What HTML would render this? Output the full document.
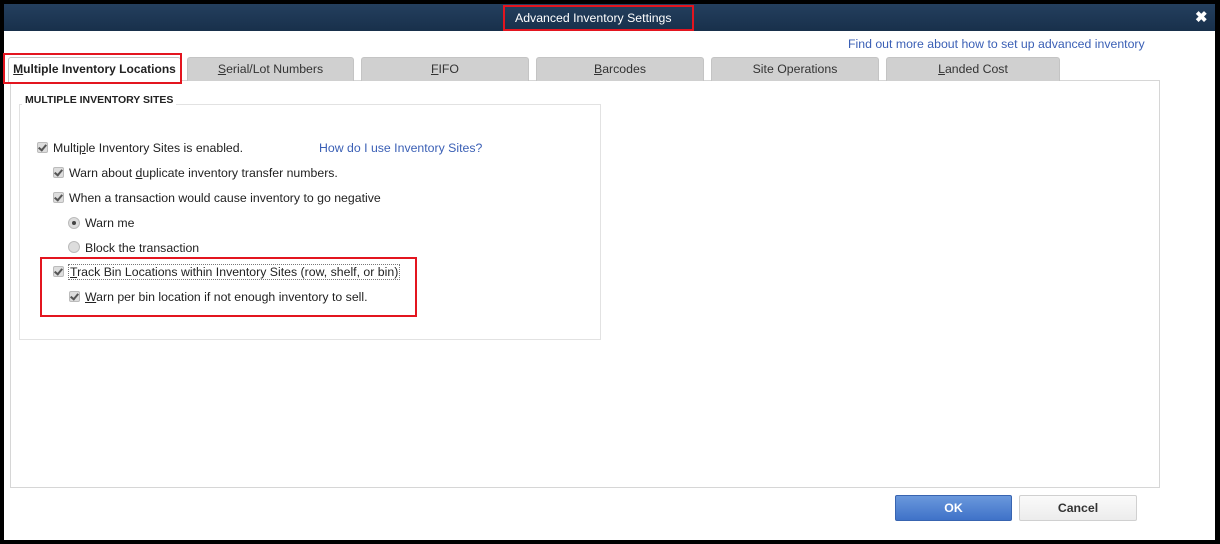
<!DOCTYPE html>
<html><head><style>
*{margin:0;padding:0;box-sizing:border-box}
body{width:1220px;height:544px;background:#000;position:relative;overflow:hidden;font-family:"Liberation Sans",Arial,sans-serif;font-size:12.3px;color:#222}
.a{position:absolute;white-space:nowrap}
.win{left:4px;top:4px;width:1211px;height:536px;background:#fff}
.title{left:4px;top:4px;width:1211px;height:27px;background:linear-gradient(#243f5e,#18304b)}
.tab{top:57px;height:24px;background:#d0d0d0;border:1px solid #c4c4c4;border-bottom:none;border-radius:3px 3px 0 0;text-align:center;line-height:23px;font-size:12.3px;color:#333}
.cb{width:11px;height:11px;background:#ddd;border:1px solid #bbb;border-radius:2px}
.cb::after{content:"";position:absolute;left:2px;top:0px;width:3px;height:6px;border:solid #555;border-width:0 2px 2px 0;transform:rotate(40deg)}
.rd{width:12px;height:12px;border-radius:50%;background:#ddd;border:1px solid #bbb}
.lbl{font-size:12.3px;color:#222}
.link{color:#3a5fb5}
.red{border:2px solid #e3151f}
u{text-decoration:underline}
</style></head><body>
<div class="a win"></div>
<div class="a title"></div>
<div class="a red" style="left:503px;top:5px;width:191px;height:26px"></div>
<div class="a" style="left:515px;top:11px;color:#fff;font-size:12.3px">Advanced Inventory Settings</div>
<div class="a" style="left:1195px;top:8px;color:#fff;font-size:15px;font-weight:bold">✖</div>
<div class="a link" style="left:848px;top:37px">Find out more about how to set up advanced inventory</div>
<div class="a" style="left:10px;top:80px;width:1150px;height:408px;border:1px solid #d6d6d6"></div>
<div class="a tab" style="left:8px;width:173px;background:#fff;font-weight:bold;color:#222;height:25px;font-size:12px"><u>M</u>ultiple Inventory Locations</div>
<div class="a red" style="left:3px;top:53px;width:179px;height:31px"></div>
<div class="a tab" style="left:187px;width:167px"><u>S</u>erial/Lot Numbers</div>
<div class="a tab" style="left:361px;width:168px"><u>F</u>IFO</div>
<div class="a tab" style="left:536px;width:168px"><u>B</u>arcodes</div>
<div class="a tab" style="left:711px;width:168px">Site Operations</div>
<div class="a tab" style="left:886px;width:174px"><u>L</u>anded Cost</div>
<div class="a" style="left:19px;top:104px;width:582px;height:236px;border:1px solid #e2e2e2"></div>
<div class="a" style="left:22px;top:94px;background:#fff;padding:0 3px;font-size:10.5px;font-weight:bold;color:#222">MULTIPLE INVENTORY SITES</div>
<div class="a cb" style="left:37px;top:142px"></div><div class="a lbl" style="left:53px;top:141px">Multi<u>p</u>le Inventory Sites is enabled.</div>
<div class="a link" style="left:319px;top:141px">How do I use Inventory Sites?</div>
<div class="a cb" style="left:53px;top:167px"></div><div class="a lbl" style="left:69px;top:166px">Warn about <u>d</u>uplicate inventory transfer numbers.</div>
<div class="a cb" style="left:53px;top:192px"></div><div class="a lbl" style="left:69px;top:191px">When a transaction would cause inventory to go negative</div>
<div class="a rd" style="left:68px;top:217px"><div class="a" style="left:3px;top:3px;width:4px;height:4px;border-radius:50%;background:#444"></div></div><div class="a lbl" style="left:85px;top:216px">Warn me</div>
<div class="a rd" style="left:68px;top:241px"></div><div class="a lbl" style="left:85px;top:241px">Block the transaction</div>
<div class="a cb" style="left:53px;top:266px"></div><div class="a lbl" style="left:68px;top:264px;border:1px dotted #777;padding:0 1px"><u>T</u>rack Bin Locations within Inventory Sites (row, shelf, or bin)</div>
<div class="a cb" style="left:69px;top:291px"></div><div class="a lbl" style="left:85px;top:290px"><u>W</u>arn per bin location if not enough inventory to sell.</div>
<div class="a red" style="left:40px;top:257px;width:377px;height:60px"></div>
<div class="a" style="left:895px;top:495px;width:117px;height:26px;background:linear-gradient(#6a98dc,#3f72c8);border:1px solid #3864b0;border-radius:2px;color:#fff;font-weight:bold;text-align:center;line-height:24px">OK</div>
<div class="a" style="left:1019px;top:495px;width:118px;height:26px;background:linear-gradient(#fafafa,#ececec);border:1px solid #d0d0d0;border-radius:2px;color:#333;font-weight:bold;text-align:center;line-height:24px">Cancel</div>
</body></html>
